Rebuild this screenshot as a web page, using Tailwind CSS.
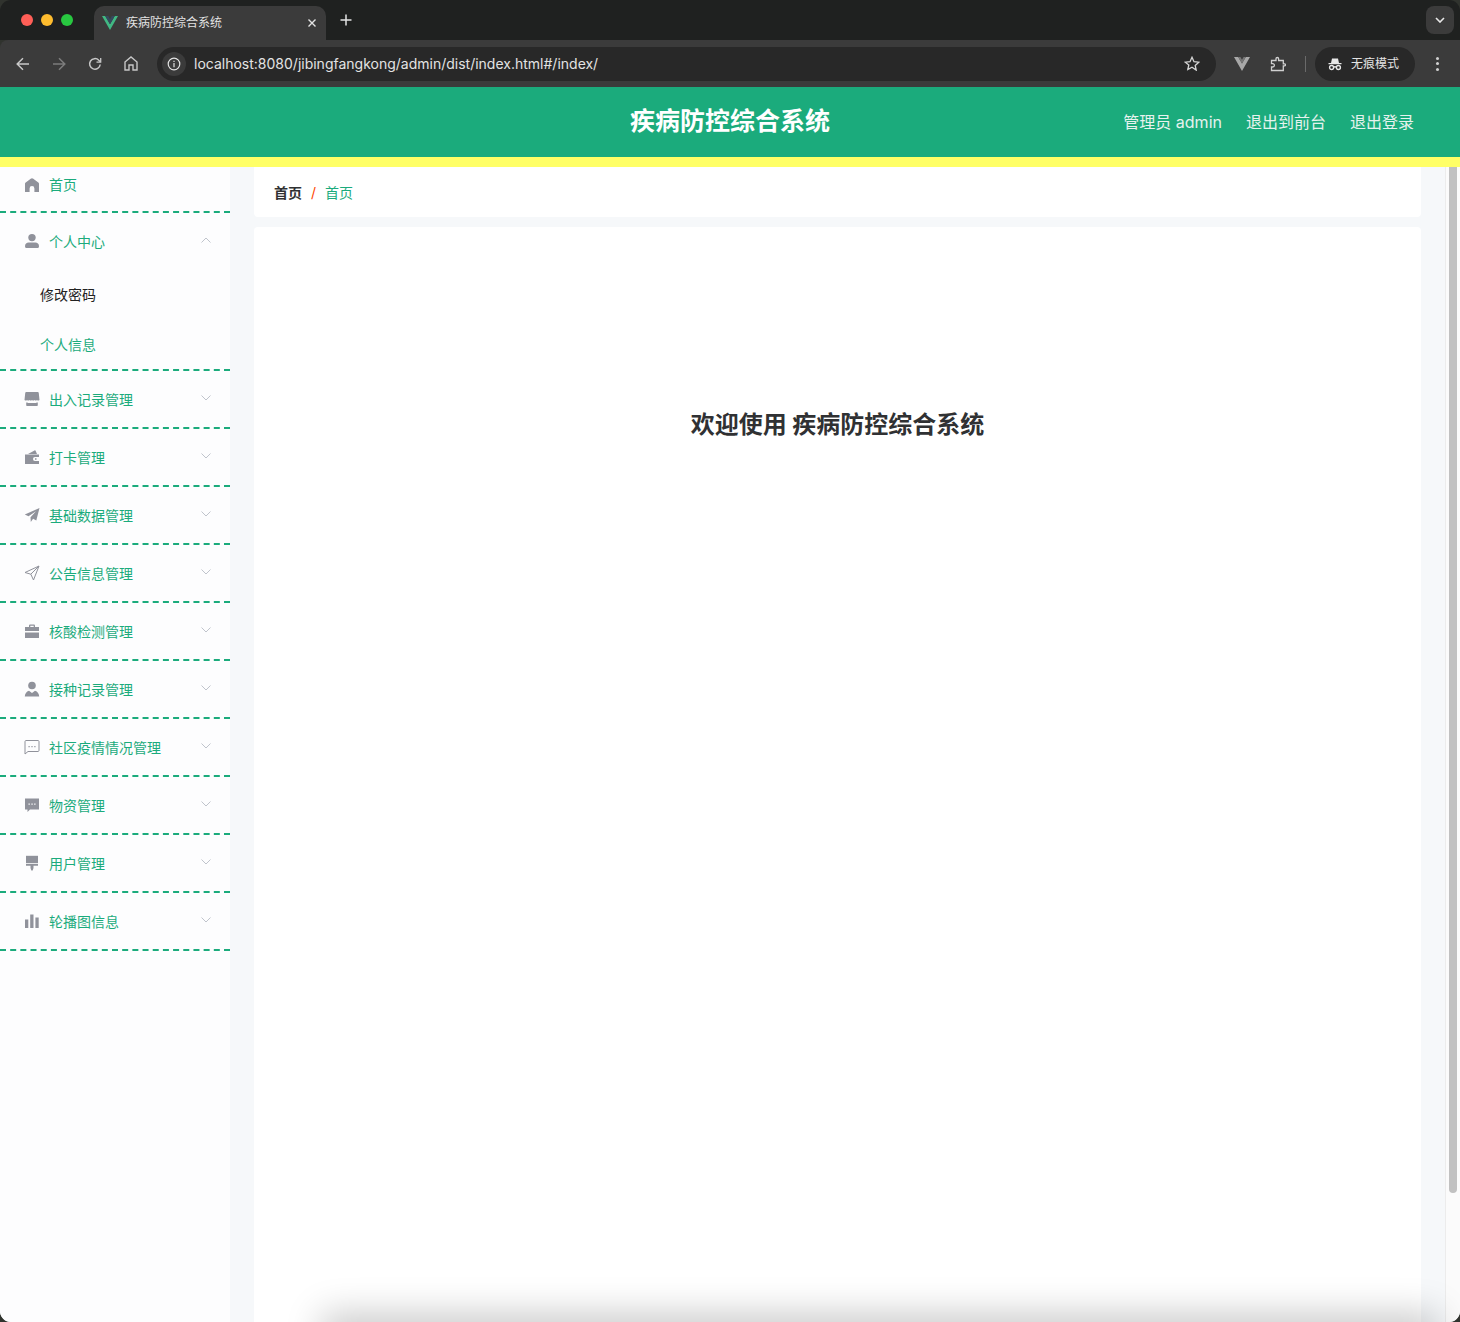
<!DOCTYPE html>
<html lang="zh-CN">
<head>
    <meta charset="UTF-8">
    <meta name="viewport" content="width=device-width, initial-scale=1.0">
    <title>疾病防控综合系统</title>
    <script src="https://cdn.jsdelivr.net/npm/@tailwindcss/browser@4"></script>
</head>
<body class="bg-[#30332e] font-['Inter','Noto_Sans_CJK_SC',sans-serif]">
<div class="relative h-[1322px] w-[1460px] overflow-hidden rounded-[11px] flex flex-col">

    <!-- tab strip -->
    <div class="h-[40px] shrink-0 bg-[#1f2120] flex items-end">
        <div class="flex h-[40px] w-[94px] items-center pb-0 pl-[21px] gap-[8px]">
            <span class="w-[12px] h-[12px] rounded-full bg-[#ff5f57]"></span>
            <span class="w-[12px] h-[12px] rounded-full bg-[#febc2e]"></span>
            <span class="w-[12px] h-[12px] rounded-full bg-[#28c840]"></span>
        </div>
        <div class="relative h-[34px] w-[232px] rounded-t-[10px] bg-[#3b3b3b] flex items-center pl-[8px] pr-[9px]">
            <svg class="w-[16px] h-[14px] shrink-0" viewBox="0 0 16 14"><path d="M0 0h3.2L8 8.3 12.8 0H16L8 14z" fill="#41b883"/><path d="M3.2 0h3L8 3.2 9.8 0h3L8 8.3z" fill="#35495e"/></svg>
            <span class="ml-[8px] text-[12px] leading-none text-[#e3e3e3]">疾病防控综合系统</span>
            <svg class="ml-auto w-[10px] h-[10px]" viewBox="0 0 10 10" fill="none" stroke="#e3e3e3" stroke-width="1.4"><path d="M1.5 1.5l7 7M8.5 1.5l-7 7"/></svg>
        </div>
        <svg class="ml-[14px] mb-[14px] w-[12px] h-[12px]" viewBox="0 0 12 12" fill="none" stroke="#e3e3e3" stroke-width="1.5"><path d="M6 .5v11M.5 6h11"/></svg>
        <div class="ml-auto mr-[6px] mb-[6px] w-[28px] h-[28px] rounded-[8px] bg-[#3b3b3b] flex items-center justify-center">
            <svg class="w-[10px] h-[6px]" viewBox="0 0 10 6" fill="none" stroke="#e8e8e8" stroke-width="1.6"><path d="M1 1l4 4 4-4"/></svg>
        </div>
    </div>

    <!-- toolbar -->
    <div class="h-[47px] shrink-0 bg-[#3b3b3b] rounded-tl-[8px] flex items-center pl-[5px]">
        <div class="w-[36px] flex justify-center">
            <svg class="w-[14px] h-[14px]" viewBox="0 0 14 14" fill="none" stroke="#c7c7c7" stroke-width="1.5"><path d="M13 7H1.5M7 1.2L1.2 7 7 12.8"/></svg>
        </div>
        <div class="w-[36px] flex justify-center">
            <svg class="w-[14px] h-[14px]" viewBox="0 0 14 14" fill="none" stroke="#7c7c7c" stroke-width="1.5"><path d="M1 7h11.5M7 1.2L12.8 7 7 12.8"/></svg>
        </div>
        <div class="w-[36px] flex justify-center">
            <svg class="w-[14px] h-[14px]" viewBox="0 0 14 14" fill="none" stroke="#c7c7c7" stroke-width="1.5"><path d="M12.2 7.5a5.3 5.3 0 1 1-1.4-4.2L12.6 5"/><path d="M12.7 1v4.2H8.5" stroke-width="1.3"/></svg>
        </div>
        <div class="w-[36px] flex justify-center">
            <svg class="w-[14px] h-[15px]" viewBox="0 0 14 15" fill="none" stroke="#c7c7c7" stroke-width="1.4"><path d="M1 6l6-5 6 5v8H9V9H5v5H1z"/></svg>
        </div>
        <div class="ml-[8px] h-[34px] w-[1059px] rounded-full bg-[#282828] flex items-center pl-[5px] pr-[16px]">
            <div class="w-[24px] h-[24px] rounded-full bg-[#3b3b3b] flex items-center justify-center">
                <svg class="w-[14px] h-[14px]" viewBox="0 0 14 14" fill="none" stroke="#e3e3e3" stroke-width="1.2"><circle cx="7" cy="7" r="5.8"/><path d="M7 6v4.2M7 3.7v1.3"/></svg>
            </div>
            <span class="ml-[8px] text-[14px] text-[#e3e3e3]">localhost:8080/jibingfangkong/admin/dist/index.html#/index/</span>
            <svg class="ml-auto w-[16px] h-[15px]" viewBox="0 0 16 15" fill="none" stroke="#d6d6d6" stroke-width="1.3"><path d="M8 1.3l2 4.4 4.8.5-3.6 3.2 1 4.7L8 11.3 3.8 13.6l1-4.7L1.2 6.2 6 5.7z"/></svg>
        </div>
        <div class="ml-[8px] w-[36px] flex justify-center">
            <svg class="w-[16px] h-[14px]" viewBox="0 0 16 14"><path d="M0 0h4.2L8 6.5 11.8 0H16L8 14z" fill="#a8a8a8"/><path d="M4.2 0h2.2L8 2.8 9.6 0h2.2L8 6.5z" fill="#777"/></svg>
        </div>
        <div class="w-[36px] flex justify-center">
            <svg class="w-[16px] h-[16px]" viewBox="0 0 16 16" fill="none" stroke="#d0d0d0" stroke-width="1.3"><path d="M1.5 4.5H6V2.8a1.3 1.3 0 0 1 2.6 0v1.7h4.7v3.3h1.2a.9.9 0 0 1 0 2h-1.2v4.7H1.5V11h1.2a1.2 1.2 0 0 0 0-3.4H1.5z"/></svg>
        </div>
        <span class="ml-[9px] w-[1px] h-[16px] bg-[#6a6a6a]"></span>
        <div class="ml-[9px] h-[34px] w-[100px] rounded-full bg-[#282828] flex items-center pl-[13px]">
            <svg class="w-[14px] h-[14px]" viewBox="0 0 14 14" fill="none" stroke="#e8e8e8" stroke-width="1.4"><path d="M3 6l1-4.5h6L11 6" fill="#e8e8e8" stroke="none"/><path d="M0.5 6.6h13"/><circle cx="3.6" cy="10.5" r="2"/><circle cx="10.4" cy="10.5" r="2"/><path d="M5.6 10.2c.9-.5 1.9-.5 2.8 0"/></svg>
            <span class="ml-[9px] text-[12px] text-[#e3e3e3]">无痕模式</span>
        </div>
        <div class="ml-[4px] w-[36px] flex flex-col items-center gap-[2.5px]">
            <span class="w-[3px] h-[3px] rounded-full bg-[#d0d0d0]"></span>
            <span class="w-[3px] h-[3px] rounded-full bg-[#d0d0d0]"></span>
            <span class="w-[3px] h-[3px] rounded-full bg-[#d0d0d0]"></span>
        </div>
    </div>

    <!-- app header -->
    <header class="h-[80px] shrink-0 bg-[#1bab7c] border-b-[10px] border-[#ffff66] grid grid-cols-[1fr_auto_1fr] items-center">
        <div></div>
        <div class="text-[25px] font-bold text-white">疾病防控综合系统</div>
        <div class="flex justify-end gap-[24px] pr-[46px] text-[16px] text-[#e6f2ee]">
            <span>管理员 admin</span>
            <span>退出到前台</span>
            <span>退出登录</span>
        </div>
    </header>

    <div class="flex-1 flex min-h-0 bg-[#f6f8fa]">
        <!-- sidebar -->
        <aside class="w-[230px] shrink-0 bg-[#fdfdfe] text-[14px] text-[#1bab7c]">
            <div class="h-[46px] pb-[10px] pl-[24px] flex items-center border-b-2 border-dashed border-[#1bab7c]">
                <svg class="w-[16px] h-[16px] mr-[9px] mt-[2px]" viewBox="0 0 16 16" fill="#90929b"><path d="M8 1.2c.5 0 .9.2 1.3.5l5 3.8c.4.3.7.8.7 1.3V15h-4.6v-3.6a2.4 2.4 0 0 0-4.8 0V15H1V6.8c0-.5.3-1 .7-1.3l5-3.8c.4-.3.8-.5 1.3-.5z"/></svg>
                <span>首页</span>
            </div>

            <div class="border-b-2 border-dashed border-[#1bab7c]">
                <div class="h-[56px] pl-[24px] pr-[19px] flex items-center">
                    <svg class="w-[16px] h-[16px] mr-[9px]" viewBox="0 0 16 16" fill="#90929b"><circle cx="8" cy="4.6" r="3.7"/><path d="M1 13.2c0-2.2 1.7-3.6 3.6-3.6h6.8c1.900 0 3.600 1.400 3.600 3.600 0 1.100-.5 1.800-1.600 1.800H2.600C1.500 15 1 14.300 1 13.200z"/></svg>
                    <span>个人中心</span>
                    <svg class="ml-auto mb-[3px] w-[10px] h-[6px]" viewBox="0 0 10 6" fill="none" stroke="#c0c4cc"><path d="M.5 5.500L5 1l4.500 4.500"/></svg>
                </div>
                <div class="h-[50px] pl-[40px] flex items-center text-[#222]">修改密码</div>
                <div class="h-[50px] pl-[40px] flex items-center">个人信息</div>
            </div>

            <div class="h-[58px] pl-[24px] pr-[19px] flex items-center border-b-2 border-dashed border-[#1bab7c]">
                <svg class="w-[16px] h-[16px] mr-[9px]" viewBox="0 0 16 16" fill="#90929b"><path d="M2.500 1h11c.8 0 1.200.5 1.300 1.200L15.500 9c-1 .8-1.900.8-2.500 0-.8.8-1.700.8-2.500 0-.8.8-1.700.8-2.500 0-.8.8-1.700.8-2.500 0-.8.8-1.700.8-2.500 0-.6.800-1.500.8-2.500 0l.7-6.800C1.300 1.500 1.700 1 2.500 1z"/><path d="M2.200 11.500c.5 0 .9 0 1.300-.2v.7h9v-.7c.4.2.8.2 1.300.2V14c0 .6-.4 1-1 1H3.200c-.6 0-1-.4-1-1z"/></svg>
                <span>出入记录管理</span>
                <svg class="ml-auto mb-[3px] w-[10px] h-[6px]" viewBox="0 0 10 6" fill="none" stroke="#c0c4cc"><path d="M.5.500L5 5l4.500-4.500"/></svg>
            </div>

            <div class="h-[58px] pl-[24px] pr-[19px] flex items-center border-b-2 border-dashed border-[#1bab7c]">
                <svg class="w-[16px] h-[16px] mr-[9px]" viewBox="0 0 16 16" fill="#90929b"><path d="M4 5l6.500-3.500c.6-.3 1-.1 1.200.4L13 5z"/><path fill-rule="evenodd" d="M1 5.500h14V8h-4a2 2 0 0 0 0 4h4v3H1zM11 9.200h1.500v1.500H11z"/></svg>
                <span>打卡管理</span>
                <svg class="ml-auto mb-[3px] w-[10px] h-[6px]" viewBox="0 0 10 6" fill="none" stroke="#c0c4cc"><path d="M.5.500L5 5l4.500-4.500"/></svg>
            </div>

            <div class="h-[58px] pl-[24px] pr-[19px] flex items-center border-b-2 border-dashed border-[#1bab7c]">
                <svg class="w-[16px] h-[16px] mr-[9px]" viewBox="0 0 16 16" fill="#90929b"><path d="M15.500 1L.8 7.500l3.700 1.700 7.500-5-5.500 6 .3 4.800 2.300-3.200 3.200 1.700z"/></svg>
                <span>基础数据管理</span>
                <svg class="ml-auto mb-[3px] w-[10px] h-[6px]" viewBox="0 0 10 6" fill="none" stroke="#c0c4cc"><path d="M.5.500L5 5l4.500-4.500"/></svg>
            </div>

            <div class="h-[58px] pl-[24px] pr-[19px] flex items-center border-b-2 border-dashed border-[#1bab7c]">
                <svg class="w-[16px] h-[16px] mr-[9px]" viewBox="0 0 16 16" fill="none" stroke="#90929b" stroke-width="1"><path d="M15 1L1 7.500l5.800 1.700L9.500 15z"/><path d="M15 1L6.800 9.200"/></svg>
                <span>公告信息管理</span>
                <svg class="ml-auto mb-[3px] w-[10px] h-[6px]" viewBox="0 0 10 6" fill="none" stroke="#c0c4cc"><path d="M.5.500L5 5l4.500-4.500"/></svg>
            </div>

            <div class="h-[58px] pl-[24px] pr-[19px] flex items-center border-b-2 border-dashed border-[#1bab7c]">
                <svg class="w-[16px] h-[16px] mr-[9px]" viewBox="0 0 16 16" fill="#90929b"><path fill-rule="evenodd" d="M5 4V2.800C5 2 5.600 1.500 6.300 1.500h3.400c.7 0 1.300.5 1.300 1.300V4h4v4H1V4zm1.300 0h3.400V2.800H6.300z"/><path d="M1 9.500h14V15H1z"/></svg>
                <span>核酸检测管理</span>
                <svg class="ml-auto mb-[3px] w-[10px] h-[6px]" viewBox="0 0 10 6" fill="none" stroke="#c0c4cc"><path d="M.5.500L5 5l4.500-4.500"/></svg>
            </div>

            <div class="h-[58px] pl-[24px] pr-[19px] flex items-center border-b-2 border-dashed border-[#1bab7c]">
                <svg class="w-[16px] h-[16px] mr-[9px]" viewBox="0 0 16 16" fill="#90929b"><circle cx="8" cy="4.500" r="3.800"/><path d="M.8 15.500c.2-2.800 1.500-5 4.200-5.800L8 12l3-2.300c2.700.8 4 3 4.200 5.800z"/></svg>
                <span>接种记录管理</span>
                <svg class="ml-auto mb-[3px] w-[10px] h-[6px]" viewBox="0 0 10 6" fill="none" stroke="#c0c4cc"><path d="M.5.500L5 5l4.500-4.500"/></svg>
            </div>

            <div class="h-[58px] pl-[24px] pr-[19px] flex items-center border-b-2 border-dashed border-[#1bab7c]">
                <svg class="w-[16px] h-[16px] mr-[9px]" viewBox="0 0 16 16"><path d="M2 1.500h12c.5 0 1 .4 1 1v9c0 .6-.5 1-1 1H4L1 15V2.500c0-.6.500-1 1-1z" fill="none" stroke="#90929b"/><path d="M4.500 7h1.200v1.200H4.500zM7.400 7h1.200v1.200H7.400zM10.300 7h1.200v1.200h-1.200z" fill="#90929b"/></svg>
                <span>社区疫情情况管理</span>
                <svg class="ml-auto mb-[3px] w-[10px] h-[6px]" viewBox="0 0 10 6" fill="none" stroke="#c0c4cc"><path d="M.5.500L5 5l4.500-4.500"/></svg>
            </div>

            <div class="h-[58px] pl-[24px] pr-[19px] flex items-center border-b-2 border-dashed border-[#1bab7c]">
                <svg class="w-[16px] h-[16px] mr-[9px]" viewBox="0 0 16 16"><path d="M1 1.500h14v11H6L3.500 15v-2.500H1z" fill="#90929b"/><path d="M4.500 6.500h1.300v1.300H4.500zM7.400 6.500h1.300v1.300H7.400zM10.200 6.500h1.300v1.300h-1.300z" fill="#fdfdfe"/></svg>
                <span>物资管理</span>
                <svg class="ml-auto mb-[3px] w-[10px] h-[6px]" viewBox="0 0 10 6" fill="none" stroke="#c0c4cc"><path d="M.5.500L5 5l4.500-4.500"/></svg>
            </div>

            <div class="h-[58px] pl-[24px] pr-[19px] flex items-center border-b-2 border-dashed border-[#1bab7c]">
                <svg class="w-[16px] h-[16px] mr-[9px]" viewBox="0 0 16 16" fill="#90929b"><path d="M2 .8h12V8.200H2z"/><path d="M2 9h12v1.800H9.500v2.200L8.700 15.500H7.300L6.500 13v-2.200H2z"/></svg>
                <span>用户管理</span>
                <svg class="ml-auto mb-[3px] w-[10px] h-[6px]" viewBox="0 0 10 6" fill="none" stroke="#c0c4cc"><path d="M.5.500L5 5l4.500-4.500"/></svg>
            </div>

            <div class="h-[58px] pl-[24px] pr-[19px] flex items-center border-b-2 border-dashed border-[#1bab7c]">
                <svg class="w-[16px] h-[16px] mr-[9px]" viewBox="0 0 16 16" fill="#90929b"><path d="M1 6.500h3.300V15H1zM6.200 1.500h3.300V15H6.200zM11.400 4.500h3.300V15h-3.300z"/></svg>
                <span>轮播图信息</span>
                <svg class="ml-auto mb-[3px] w-[10px] h-[6px]" viewBox="0 0 10 6" fill="none" stroke="#c0c4cc"><path d="M.5.500L5 5l4.500-4.500"/></svg>
            </div>
        </aside>

        <!-- content -->
        <main class="flex-1 min-w-0 px-[24px] flex flex-col gap-[10px]">
            <div class="h-[50px] shrink-0 rounded-b-[4px] bg-white pl-[20px] flex items-center text-[14px]">
                <span class="font-bold text-[#303133]">首页</span>
                <span class="mx-[9px] text-[#ff4500]">/</span>
                <span class="text-[#1bab7c]">首页</span>
            </div>
            <div class="flex-1 rounded-t-[4px] bg-white pt-[180px] text-center">
                <h1 class="text-[24px] leading-[36px] font-bold text-[#303133]">欢迎使用 疾病防控综合系统</h1>
            </div>
        </main>

        <!-- page scrollbar -->
        <div class="w-[15px] shrink-0 bg-[#fbfbfb] border-l border-[#ececec] pl-[3px]">
            <div class="h-[1026px] w-[8px] rounded-b-full bg-[#c1c1c1]"></div>
        </div>
    </div>

    <!-- shadow of the window below, falling over the page -->
    <div class="absolute left-[330px] right-[30px] bottom-[-24px] h-[24px] shadow-[0_0_36px_8px_rgba(0,0,0,0.22)]"></div>
</div>
</body>
</html>
